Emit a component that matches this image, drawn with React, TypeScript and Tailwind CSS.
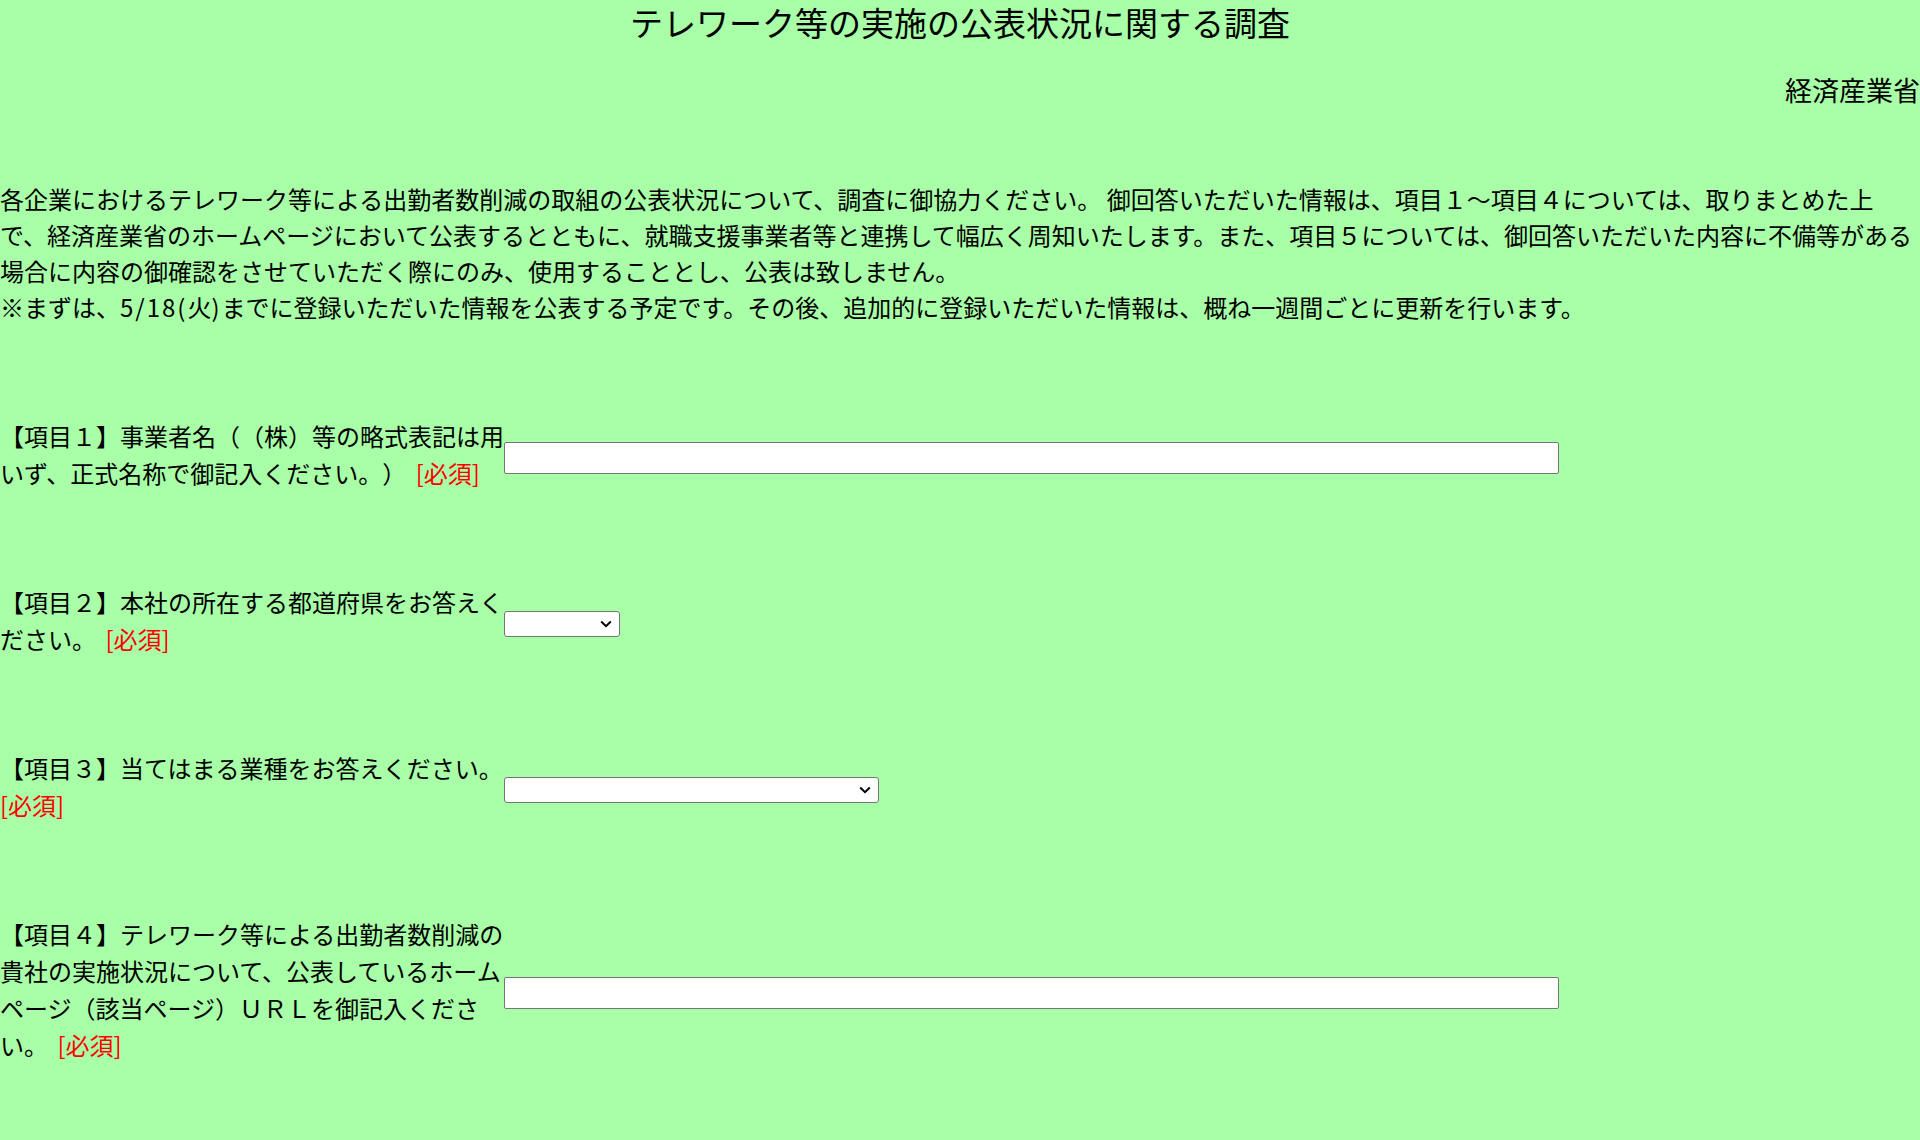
import { useState } from "react";

const prefectures = [
  "北海道", "青森県", "岩手県", "宮城県", "秋田県", "山形県", "福島県",
  "茨城県", "栃木県", "群馬県", "埼玉県", "千葉県", "東京都", "神奈川県",
  "新潟県", "富山県", "石川県", "福井県", "山梨県", "長野県", "岐阜県",
  "静岡県", "愛知県", "三重県", "滋賀県", "京都府", "大阪府", "兵庫県",
  "奈良県", "和歌山県", "鳥取県", "島根県", "岡山県", "広島県", "山口県",
  "徳島県", "香川県", "愛媛県", "高知県", "福岡県", "佐賀県", "長崎県",
  "熊本県", "大分県", "宮崎県", "鹿児島県", "沖縄県",
];

const industries = [
  "農業，林業", "漁業", "鉱業，採石業，砂利採取業", "建設業", "製造業",
  "電気・ガス・熱供給・水道業", "情報通信業", "運輸業，郵便業", "卸売業，小売業",
  "金融業，保険業", "不動産業，物品賃貸業", "学術研究，専門・技術サービス業",
  "宿泊業，飲食サービス業", "生活関連サービス業，娯楽業", "教育，学習支援業",
  "医療，福祉", "複合サービス事業", "サービス業（他に分類されないもの）", "その他",
];

type Item = {
  no: string;
  label: string;
  kind: "text" | "pref" | "industry";
};

const items: Item[] = [
  { no: "１", label: "事業者名（（株）等の略式表記は用いず、正式名称で御記入ください。）", kind: "text" },
  { no: "２", label: "本社の所在する都道府県をお答えください。", kind: "pref" },
  { no: "３", label: "当てはまる業種をお答えください。", kind: "industry" },
  {
    no: "４",
    label: "テレワーク等による出勤者数削減の貴社の実施状況について、公表しているホームページ（該当ページ）ＵＲＬを御記入ください。",
    kind: "text",
  },
];

function Chevron() {
  return (
    <svg
      className="pointer-events-none absolute right-[8px] top-1/2 -translate-y-1/2"
      width="12"
      height="8"
      viewBox="0 0 12 8"
      fill="none"
    >
      <path d="M1.2 1.5 L6 6.2 L10.8 1.5" stroke="#000" strokeWidth="2" />
    </svg>
  );
}

export default function App() {
  const [values, setValues] = useState<Record<string, string>>({});

  const update = (no: string, v: string) => setValues({ ...values, [no]: v });

  const renderControl = (item: Item) => {
    const value = values[item.no] ?? "";
    if (item.kind === "text") {
      return (
        <input
          type="text"
          value={value}
          onChange={(e) => update(item.no, e.target.value)}
          className="block w-[1055px] h-[32px] bg-white border border-[#767676] rounded-[2px] px-1 text-[16px] outline-none"
        />
      );
    }
    const options = item.kind === "pref" ? prefectures : industries;
    return (
      <div className={`relative h-[26px] ${item.kind === "pref" ? "w-[116px]" : "w-[375px]"}`}>
        <select
          value={value}
          onChange={(e) => update(item.no, e.target.value)}
          className="appearance-none block w-full h-full bg-white border border-[#767676] rounded-[3px] pl-1 pr-6 text-[13px] leading-none outline-none"
        >
          <option value=""></option>
          {options.map((o) => (
            <option key={o} value={o}>
              {o}
            </option>
          ))}
        </select>
        <Chevron />
      </div>
    );
  };

  return (
    <div className="min-h-screen bg-[#a8ffa8] text-black font-['Noto_Sans_CJK_JP',sans-serif] [text-spacing-trim:space-all]">
      {/* Title */}
      <h1 className="text-center text-[33px] leading-[44px] font-normal">
        テレワーク等の実施の公表状況に関する調査
      </h1>
      <p className="mt-[28px] text-right text-[27px] leading-[36px]">経済産業省</p>

      {/* Intro */}
      <p className="mt-[73px] text-[24px] leading-[36px]">
        各企業におけるテレワーク等による出勤者数削減の取組の公表状況について、調査に御協力ください。 御回答いただいた情報は、項目１～項目４については、取りまとめた上で、経済産業省のホームページにおいて公表するとともに、就職支援事業者等と連携して幅広く周知いたします。また、項目５については、御回答いただいた内容に不備等がある場合に内容の御確認をさせていただく際にのみ、使用することとし、公表は致しません。
        <br />
        ※まずは、<span className="tracking-[2px]">5/18(</span>火<span className="tracking-[2px]">)</span>までに登録いただいた情報を公表する予定です。その後、追加的に登録いただいた情報は、概ね一週間ごとに更新を行います。
      </p>

      {/* Form items */}
      <form className="text-[24px] leading-[37px] pb-[60px]" onSubmit={(e) => e.preventDefault()}>
        {items.map((item) => (
          <div key={item.no} className="mt-[92px] flex items-center">
            <div className="w-[504px] shrink-0">
              【項目{item.no}】{item.label}
              <span className="tracking-[4px]"> </span>
              <span className="text-[#ff0000]">[必須]</span>
            </div>
            <div className="mt-[7px]">{renderControl(item)}</div>
          </div>
        ))}
      </form>
    </div>
  );
}
